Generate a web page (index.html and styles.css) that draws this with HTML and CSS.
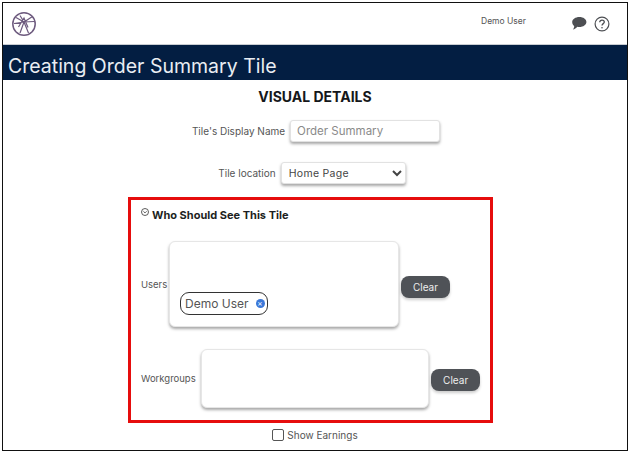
FILE: index.html
```html
<!DOCTYPE html>
<html lang="en">
<head>
<meta charset="utf-8">
<title>Creating Order Summary Tile</title>
<link rel="stylesheet" href="styles.css">
</head>
<body>
<div class="frame">
  <header class="top">
    <svg class="logo" width="26" height="26" viewBox="0 0 26 26" fill="none" stroke="#6d5a7e" stroke-width="1.2">
      <circle cx="13" cy="13" r="11.2" stroke-width="1.5"/>
      <path d="M5 6.5 13 11 21.5 5.5M13 11 9 22M13 11 17.5 22M3 12.5 13 11 23 10.5M7.5 16 13 7 17 16.5M9 4.5 13 11"/>
    </svg>
    <span class="user">Demo User</span>
    <svg class="chat" width="16" height="15" viewBox="0 0 16 15"><path d="M8.4 1C12.3 1 15.4 3.2 15.4 6S12.3 11 8.400 11C7.600 11 7 11 6.300 10.800 5.200 12.100 3.600 13.300 1.800 13.600 2.600 12.600 3.200 11.300 3.200 9.900 1.900 9 1.200 7.600 1.200 6 1.200 3.200 4.500 1 8.400 1Z" fill="#4d4f53"/></svg>
    <svg class="help" width="16" height="16" viewBox="0 0 16 16" fill="none" stroke="#4d4f53"><circle cx="8" cy="8" r="6.900" stroke-width="1.200"/><path d="M5.700 6.300C5.700 5 6.700 4.100 8 4.100S10.300 5 10.300 6.100C10.300 7.600 8 7.700 8 9.600" stroke-width="1.300"/><circle cx="8" cy="11.700" r=".8" fill="#4d4f53" stroke="none"/></svg>
  </header>
  <h1 class="band">Creating Order Summary Tile</h1>
  <h2 class="section">VISUAL DETAILS</h2>
  <div class="field name-field">
    <label class="lbl">Tile's Display Name</label>
    <input class="input" type="text" placeholder="Order Summary">
  </div>
  <div class="field loc-field">
    <label class="lbl">Tile location</label>
    <select class="select"><option>Home Page</option></select>
  </div>
  <section class="redbox">
    <div class="who">
      <svg class="toggle" width="8" height="8" viewBox="0 0 8 8" fill="none" stroke="#333" stroke-width=".8"><circle cx="4" cy="4" r="3.500"/><path d="M2.400 3.300 4 4.900 5.600 3.300"/></svg>
      <strong>Who Should See This Tile</strong>
    </div>
    <div class="row users-row">
      <span class="rowlbl">Users</span>
      <div class="box users-box">
        <span class="chip">Demo User<i class="x">×</i></span>
      </div>
      <button class="clear">Clear</button>
    </div>
    <div class="row groups-row">
      <span class="rowlbl">Workgroups</span>
      <div class="box groups-box"></div>
      <button class="clear">Clear</button>
    </div>
  </section>
  <label class="earn"><span class="check"></span>Show Earnings</label>
</div>
</body>
</html>
```
FILE: styles.css
```css
* { box-sizing: border-box; }
html, body { margin: 0; background: #fff; }
body { width: 629px; height: 451px; overflow: hidden; font-family: Inter, "Open Sans", sans-serif; color: #555; }
.frame { margin: 2px 1px 0 2px; height: 449px; border: 1px solid #111; border-top-width: 1px; display: flex; flex-direction: column; overflow: hidden; }
.top { height: 41px; display: flex; align-items: center; padding: 0 17px 0 8px; background: #fff; flex: none; }
.logo { margin-top: 0; }
.user { margin-left: auto; margin-right: 45px; font-size: 8.500px; color: #555; margin-top: -6px; }
.chat { margin-right: 7px; }
.help { margin-right: 0; }
.band { margin: 0; height: 36px; flex: none; background: #031e42; color: #e9edf2; font-size: 19.500px; font-weight: 400; line-height: 42px; padding-left: 5px; border-top: 1px solid #c9cdd2; white-space: nowrap; }
.section { margin: 8px 0 0; height: 20px; text-align: center; font-size: 14px; line-height: 17px; font-weight: 700; color: #15171a; }
.field { display: flex; align-items: center; justify-content: center; }
.lbl { font-size: 10px; color: #555; margin-right: 5px; }
.name-field { margin-top: 12px; height: 22px; padding-left: 2px; }
.input { width: 150px; height: 22px; border: 1px solid #e2e2e2; border-radius: 3px; box-shadow: 0 2px 3px rgba(0,0,0,.35); padding: 0 6px; font: 11.500px Inter, sans-serif; background: #fff; outline: none; }
.input::placeholder { color: #8a8a8a; opacity: 1; }
.loc-field { margin-top: 20px; height: 22px; padding-right: 6px; }
.select { width: 125px; height: 22px; border: 1px solid #e2e2e2; border-radius: 3px; box-shadow: 0 2px 3px rgba(0,0,0,.35); padding: 0 3px; font: 10.500px Inter, sans-serif; color: #444; background: #fff; letter-spacing: .3px; }
.redbox { width: 365px; height: 226px; margin: 13px 0 0 125px; border: 3px solid #e60d0d; padding: 7px 10px 0; flex: none; }
.who { display: flex; align-items: flex-start; height: 20px; }
.toggle { margin-right: 3px; margin-top: 1px; }
.who strong { font-size: 11px; color: #1d1f22; margin-top: 1px; }
.row { display: flex; align-items: center; }
.rowlbl { font-size: 9.500px; color: #555; }
.users-row { margin-top: 14px; height: 86px; }
.users-row .rowlbl { width: 28px; }
.groups-row { margin-top: 22px; height: 59px; }
.groups-row .rowlbl { width: 60px; }
.box { width: 230px; border: 1px solid #e6e6e6; border-radius: 6px; box-shadow: 0 2px 3px rgba(0,0,0,.35); background: #fff; height: 100%; }
.users-box { display: flex; align-items: flex-end; padding: 0 0 11px 10px; }
.chip { display: inline-flex; align-items: center; height: 23px; width: 88px; border: 1px solid #333; border-radius: 9px; padding-left: 4px; font-size: 12px; color: #555; white-space: nowrap; }
.x { margin-left: 7px; width: 9px; height: 9px; border-radius: 50%; background: #3b78d8; color: #fff; font-style: normal; font-size: 8px; line-height: 9px; text-align: center; flex: none; }
.clear { margin-left: 2px; width: 49px; height: 22px; border: 0; border-radius: 8px; background: #4f5257; color: #eee; font: 10px Inter, sans-serif; box-shadow: 0 2px 3px rgba(0,0,0,.2); padding: 0; }
.users-row .clear { margin-top: 6px; }
.groups-row .clear { margin-top: 3px; }
.earn { display: flex; align-items: center; justify-content: center; margin-top: 6px; font-size: 10px; color: #555; padding-right: 0; }
.check { width: 12px; height: 12px; border: 1px solid #555; border-radius: 2px; margin-right: 3px; background: #fff; }
```
